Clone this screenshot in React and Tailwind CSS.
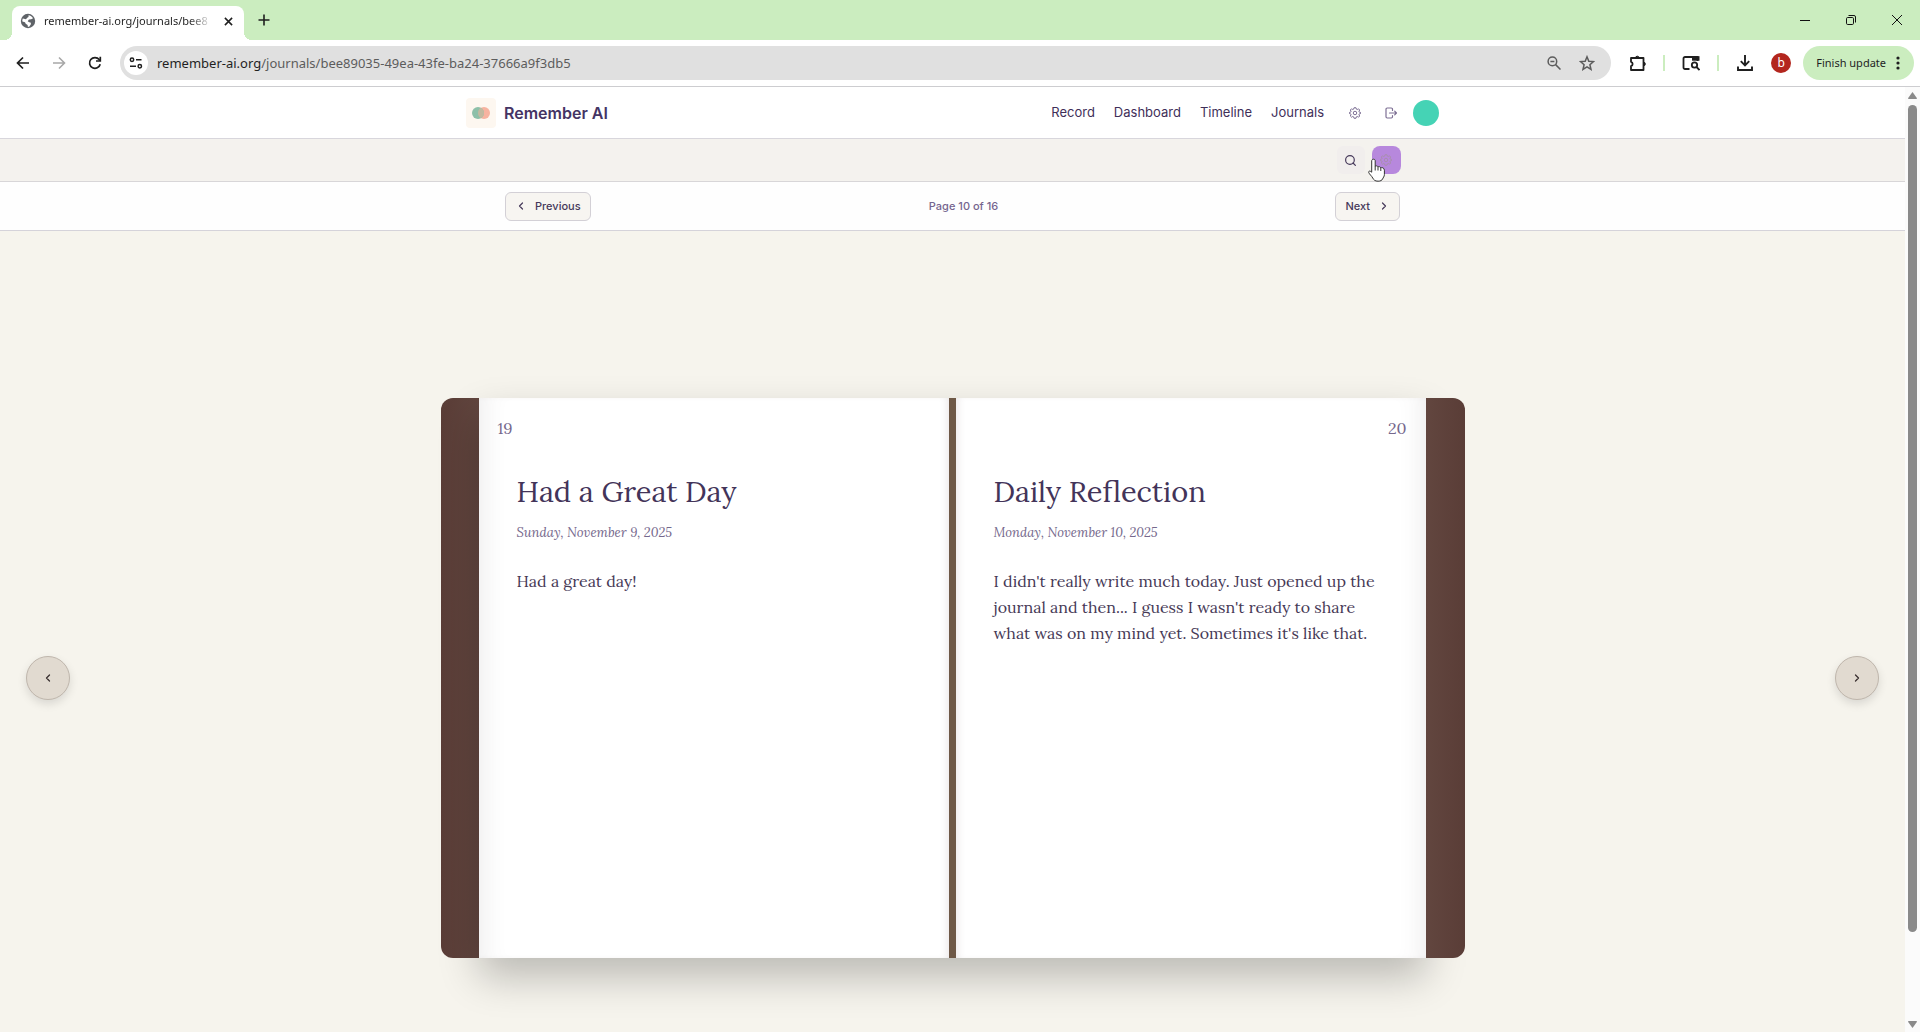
import React from "react";
import { Search, ChevronLeft, ChevronRight } from "lucide-react";

function GearIcon({ className }) {
  return (
    <svg viewBox="0 0 24 24" className={className} fill="none" stroke="currentColor" strokeWidth="2" strokeLinejoin="round">
      <path d="M10 1.500h4l.7 2.800 1.800.8 2.500-1.500 2.400 2.400-1.500 2.500.8 1.800 2.800.7v2l-2.800.7-.8 1.800 1.500 2.500-2.400 2.400-2.500-1.500-1.800.8-.7 2.800h-4l-.7-2.800-1.800-.8L5 20.400 2.600 18l1.500-2.500-.8-1.800L.5 13v-2l2.800-.7.8-1.800L2.600 6 5 3.600l2.500 1.500 1.800-.8z" />
      <circle cx="12" cy="12" r="3.500" />
    </svg>
  );
}

function TabStrip() {
  return (
    <div className="flex h-10 shrink-0 items-end bg-[#cbedbf] text-[#1f1f1f]">
      <div className="relative ml-3 flex h-[34px] w-[232px] items-center rounded-t-lg bg-white pl-2 pr-2 pb-1">
        <span className="absolute bottom-0 -left-2 h-2 w-2 bg-[radial-gradient(circle_at_0_0,#cbedbf_8px,white_8px)]" />
        <span className="absolute bottom-0 -right-2 h-2 w-2 bg-[radial-gradient(circle_at_100%_0,#cbedbf_8px,white_8px)]" />
        <svg viewBox="0 0 16 16" className="h-4 w-4 shrink-0">
          <circle cx="8" cy="8" r="7.2" fill="#5f6368" />
          <path d="M8.500 2.200c2 .2 3.700 1.400 4.600 3.100l-1.900 1-2.300.2-1.200 1.700 1.500 1.100 1.400.1.400 1.600-1.600 2.600-1.500.5-.3-2-1.900-1.300L5 9.200 2.400 8.400c-.3-1 .1-2.300.5-3L6 6.200l1.200-1.400L8.500 4z" fill="#fff" />
        </svg>
        <span className="ml-2 w-[168px] shrink-0 overflow-hidden text-[11px] whitespace-nowrap [mask-image:linear-gradient(to_right,black_145px,transparent_168px)]">
          remember-ai.org/journals/bee8
        </span>
        <button aria-label="Close tab" className="ml-3 shrink-0">
          <svg viewBox="0 0 10 10" className="h-[9px] w-[9px]" stroke="#1f1f1f" strokeWidth="1.7">
            <path d="M1 1l8 8M9 1l-8 8" />
          </svg>
        </button>
      </div>
      <button aria-label="New tab" className="mb-[14px] ml-[14px]">
        <svg viewBox="0 0 12 12" className="h-3 w-3" stroke="#1f1f1f" strokeWidth="1.6">
          <path d="M6 0.500v11M0.500 6h11" />
        </svg>
      </button>
      <div className="mr-[18px] mb-[15px] ml-auto flex items-center gap-9">
        <button aria-label="Minimize">
          <svg viewBox="0 0 10 10" className="h-[10px] w-[10px]" stroke="#111"><path d="M0 5.500h10" /></svg>
        </button>
        <button aria-label="Restore">
          <svg viewBox="0 0 10 10" className="h-[10px] w-[10px]" fill="none" stroke="#111">
            <rect x="0.500" y="2.500" width="7" height="7" rx="1.200" />
            <path d="M2.500 0.500H8a1.500 1.500 0 0 1 1.500 1.500v5.500" />
          </svg>
        </button>
        <button aria-label="Close">
          <svg viewBox="0 0 10 10" className="h-[10px] w-[10px]" stroke="#111"><path d="M0 0l10 10M10 0L0 10" /></svg>
        </button>
      </div>
    </div>
  );
}

function AddressBar() {
  return (
    <div className="flex h-[47px] shrink-0 items-center border-b border-[#cdcdd0] bg-white pr-[6px] pl-4 text-[#1f1f1f]">
      <button aria-label="Back">
        <svg viewBox="0 0 14 14" className="h-[14px] w-[14px]" fill="none" stroke="#1f1f1f" strokeWidth="1.700">
          <path d="M13 7H1.500M7 1.500L1.500 7 7 12.500" />
        </svg>
      </button>
      <button aria-label="Forward" className="ml-[22px]">
        <svg viewBox="0 0 14 14" className="h-[14px] w-[14px]" fill="none" stroke="#a8a8a8" strokeWidth="1.600">
          <path d="M1 7h11.500M7 1.500L12.500 7 7 12.500" />
        </svg>
      </button>
      <button aria-label="Reload" className="ml-[22px]">
        <svg viewBox="0 0 14 14" className="h-[14px] w-[14px]" fill="none" stroke="#1f1f1f" strokeWidth="1.700">
          <path d="M12.200 8.200A5.400 5.400 0 1 1 11.200 3.600L12 4.500" />
          <path d="M12.300 0.800v4.200H8" />
        </svg>
      </button>
      <div className="ml-[18px] flex h-[34px] flex-1 items-center rounded-full bg-[#e0e0e0] pr-4 pl-1">
        <button aria-label="Site information" className="flex h-6 w-6 items-center justify-center rounded-full bg-white">
          <svg viewBox="0 0 14 12" className="h-3 w-[14px]" fill="none" stroke="#1f1f1f" strokeWidth="1.500">
            <circle cx="3" cy="2.800" r="1.700" /><path d="M7 2.800h5.500M1 9.200h6" /><circle cx="10.800" cy="9.200" r="1.700" />
          </svg>
        </button>
        <div className="ml-[9px] text-[13px] leading-5 whitespace-nowrap text-[#5c5c5c]">
          <span className="text-[#1f1f1f]">remember-ai.org</span>/journals/bee89035-49ea-43fe-ba24-37666a9f3db5
        </div>
        <div className="ml-auto flex items-center gap-[18px]">
          <button aria-label="Zoom">
            <svg viewBox="0 0 14 14" className="h-[14px] w-[14px]" fill="none" stroke="#5c5c5c" strokeWidth="1.500">
              <circle cx="5.400" cy="5.400" r="4.300" /><path d="M8.600 8.600l4.900 4.900M3.400 5.400h4" />
            </svg>
          </button>
          <button aria-label="Bookmark">
            <svg viewBox="0 0 16 16" className="h-4 w-4" fill="none" stroke="#5c5c5c" strokeWidth="1.500">
              <path d="M8 1.800l1.800 4.400 4.700.4-3.600 3.100 1.100 4.600L8 11.800l-4 2.500 1.100-4.600L1.500 6.600l4.700-.4z" />
            </svg>
          </button>
        </div>
      </div>
      <button aria-label="Extensions" className="ml-[18px]">
        <svg viewBox="0 0 18 18" className="h-[18px] w-[18px]" fill="none" stroke="#1f1f1f" strokeWidth="1.800">
          <path d="M2 4h12.500v12H2v-3.800a2.300 2.300 0 0 0 0-4.400z" strokeLinejoin="round" />
          <path d="M6.500 4a1.800 1.800 0 0 1 3.600 0zM14.500 8.200a1.800 1.800 0 0 1 0 3.600z" fill="#1f1f1f" strokeWidth="1" />
        </svg>
      </button>
      <span className="ml-4 h-4 w-[2px] bg-[#cbedbf]" />
      <button aria-label="Search tabs" className="ml-[17px]">
        <svg viewBox="0 0 18 16" className="h-4 w-[18px]" fill="none" stroke="#1f1f1f" strokeWidth="1.800">
          <path d="M7.500 14H3a1.500 1.500 0 0 1-1.500-1.500v-9A1.500 1.500 0 0 1 3 2h12.500v4" />
          <path d="M10 1.200h7.500v4.500H10z" fill="#1f1f1f" stroke="none" />
          <circle cx="12.500" cy="10" r="2.700" /><path d="M14.500 12l3 3" />
        </svg>
      </button>
      <span className="ml-[17px] h-4 w-[2px] bg-[#cbedbf]" />
      <button aria-label="Downloads" className="ml-[18px]">
        <svg viewBox="0 0 16 16" className="h-4 w-4" fill="none" stroke="#1f1f1f" strokeWidth="1.900">
          <path d="M8 0v10M3.800 6.200L8 10.400l4.200-4.200M1 11.500V15h14v-3.500" />
        </svg>
      </button>
      <button aria-label="Profile" className="ml-[18px] flex h-5 w-5 items-center justify-center rounded-full bg-[#b3261e] text-xs leading-none text-white">b</button>
      <button className="ml-3 flex h-[34px] items-center gap-[10px] rounded-full bg-[#cbedbf] pr-[14px] pl-[13px] text-[11px] whitespace-nowrap">
        Finish update
        <svg viewBox="0 0 4 16" className="h-4 w-1" fill="#1f1f1f">
          <circle cx="2" cy="3" r="1.600" /><circle cx="2" cy="8" r="1.600" /><circle cx="2" cy="13" r="1.600" />
        </svg>
      </button>
    </div>
  );
}

function SiteHeader() {
  return (
    <header className="border-b border-[#d8d6dc] bg-white">
      <div className="mx-auto flex h-[51px] max-w-[973px] items-center">
        <a href="#home" className="flex items-center gap-2">
          <span className="flex h-[30px] w-[30px] items-center justify-center rounded bg-[#fdf7f0]">
            <svg viewBox="0 0 18 12" className="h-3 w-[18px]">
              <circle cx="12" cy="6" r="6" fill="#f7b3a0" />
              <circle cx="6" cy="6" r="6" fill="#8dc0a9" />
              <path d="M9 0.800a6 6 0 0 1 0 10.400a6 6 0 0 1 0-10.400z" fill="#c2b9a0" />
            </svg>
          </span>
          <span className="text-base font-semibold text-[#453464]">Remember AI</span>
        </a>
        <nav className="ml-auto flex items-center gap-[19px] text-[13px] text-[#3f2f59]">
          <a href="#record">Record</a>
          <a href="#dashboard">Dashboard</a>
          <a href="#timeline">Timeline</a>
          <a href="#journals">Journals</a>
        </nav>
        <div className="ml-[25px] flex items-center text-[#7d6f94]">
          <button aria-label="Settings">
            <GearIcon className="h-3 w-3" />
          </button>
          <button aria-label="Sign out" className="ml-6">
            <svg viewBox="0 0 12 12" className="h-3 w-3" fill="none" stroke="currentColor" strokeWidth="1.2" strokeLinecap="round" strokeLinejoin="round">
              <path d="M7.500 3.500V2.200A1.200 1.200 0 0 0 6.300 1H2.200A1.200 1.200 0 0 0 1 2.200v7.600A1.200 1.200 0 0 0 2.200 11h4.100a1.200 1.200 0 0 0 1.200-1.200V8.500M4.500 6h7M9.700 4.200L11.500 6 9.700 7.800" />
            </svg>
          </button>
          <button aria-label="Account" className="ml-4 h-[26px] w-[26px] rounded-full bg-[#45d3b5]" />
        </div>
      </div>
    </header>
  );
}

function JournalToolbar() {
  return (
    <div className="border-b border-[#d8d6d8] bg-[#f4f2ee]">
      <div className="mx-auto flex h-[42px] max-w-[896px] items-center justify-end gap-[7px]">
        <button aria-label="Search" className="flex h-7 w-7 items-center justify-center rounded-md bg-[#f1eeed] text-[#46395a]">
          <Search size={13} strokeWidth={2.200} />
        </button>
        <div className="relative">
          <button aria-label="Journal settings" className="flex h-7 w-[29px] items-center justify-center rounded-lg bg-[#b788dd] text-[#a98fae]">
            <GearIcon className="h-3 w-3" />
          </button>
          <svg viewBox="0 0 18 24" className="absolute top-3 -left-1 h-6 w-[18px]" fill="#fff" stroke="#333" strokeLinejoin="round">
            <path d="M5.500 1.200c1.100 0 1.700.7 1.700 1.700v5.300c.4-.6 2.500-.5 2.800.7.600-.6 2.400-.3 2.700.9.700-.5 3.700-.3 3.700 2.400v4.300c0 2.200-1.400 3.100-1.800 4.500-.6 1.300-2.200 2.200-4.500 2.200-3.100 0-4.400-1.300-5.300-3.100-1.200-2.300-3.400-3.700-4.100-5.700-.3-1.200 1-2.100 3-.2V2.900c0-1 .7-1.700 1.800-1.700z" />
            <path d="M7.200 8v4.500M10 9v3.500M12.800 10v3" />
          </svg>
        </div>
      </div>
    </div>
  );
}

function Pager() {
  return (
    <div className="border-b border-[#d5d3da] bg-[#fefefe]">
      <div className="mx-auto flex h-12 max-w-[895px] items-center text-[11px] font-medium text-[#46395a]">
        <div className="flex flex-1">
          <button className="flex h-[29px] items-center gap-2 rounded-md border border-[#d3d0d6] bg-[#f7f5f1] px-[9px]">
            <ChevronLeft size={12} strokeWidth={2.400} />Previous
          </button>
        </div>
        <span className="ml-[22px] text-[#75658f]">Page 10 of 16</span>
        <div className="flex flex-1 justify-end">
          <button className="flex h-[29px] items-center gap-2 rounded-md border border-[#d3d0d6] bg-[#f7f5f1] px-[9px]">
            Next<ChevronRight size={12} strokeWidth={2.400} />
          </button>
        </div>
      </div>
    </div>
  );
}

function BookPage({ number, title, date, side, children }) {
  const left = side === "left";
  return (
    <article
      className={
        left
          ? "flex min-w-0 flex-1 flex-col bg-white shadow-[inset_24px_0_24px_-20px_rgba(90,80,80,0.11),inset_-6px_0_8px_-5px_rgba(80,50,60,0.14)]"
          : "flex min-w-0 flex-1 flex-col bg-white shadow-[inset_-24px_0_24px_-20px_rgba(90,80,80,0.11),inset_6px_0_8px_-5px_rgba(80,50,60,0.14)]"
      }
    >
      <div className={left ? "px-[19px] pt-[18px] text-base text-[#75688c]" : "px-[19px] pt-[18px] text-right text-base text-[#75688c]"}>{number}</div>
      <div className="px-[38px] pt-8">
        <h2 className="text-[29px] leading-10 text-[#433459]">{title}</h2>
        <p className="mt-[9px] text-[13px] leading-6 text-[#75688c] italic">{date}</p>
        <p className="mt-[23px] text-base leading-[26px] text-[#463956]">{children}</p>
      </div>
    </article>
  );
}

function Book() {
  return (
    <section className="flex h-[560px] w-full max-w-[1024px] font-['Lora','Liberation_Serif',serif]">
      <div className="w-[38px] rounded-l-xl bg-linear-to-r from-[#5a3d37] to-[#62463f]" />
      <div className="flex flex-1 shadow-[0_19px_38px_rgba(0,0,0,0.24)]">
        <BookPage number="19" side="left" title="Had a Great Day" date="Sunday, November 9, 2025">
          Had a great day!
        </BookPage>
        <div className="w-[7px] bg-[#6e5846]" />
        <BookPage number="20" side="right" title="Daily Reflection" date="Monday, November 10, 2025">
          I didn't really write much today. Just opened up the journal and then... I guess I wasn't ready to share what was on my mind yet. Sometimes it's like that.
        </BookPage>
      </div>
      <div className="w-[39px] rounded-r-xl bg-linear-to-r from-[#62463f] to-[#5a3d37]" />
    </section>
  );
}

function TurnButton({ label, children }) {
  return (
    <button aria-label={label} className="flex h-11 w-11 shrink-0 items-center justify-center rounded-full border border-[#bfb6ac] bg-[#e1dad0] text-[#3a3030] shadow-[0_4px_10px_rgba(0,0,0,0.12)]">
      {children}
    </button>
  );
}

function Scrollbar() {
  return (
    <div className="flex w-[15px] shrink-0 flex-col items-center bg-[#fbfbfb] pt-[5px] pb-1">
      <svg viewBox="0 0 9 7" className="h-[7px] w-[9px]" fill="#8a8a8a"><path d="M4.500 0L9 6.200 8.500 7H.5L0 6.200z" /></svg>
      <div className="mt-[6px] mb-[89px] w-[9px] flex-1 rounded-full bg-[#8a8a8a]" />
      <svg viewBox="0 0 9 7" className="h-[7px] w-[9px]" fill="#8a8a8a"><path d="M4.500 7L9 .8 8.500 0H.5L0 .8z" /></svg>
    </div>
  );
}

export default function App() {
  return (
    <div className="flex h-screen flex-col overflow-hidden font-['Noto_Sans',sans-serif]">
      <TabStrip />
      <AddressBar />
      <div className="flex min-h-0 flex-1">
        <div className="flex min-w-0 flex-1 flex-col font-['Inter',sans-serif]">
          <SiteHeader />
          <JournalToolbar />
          <Pager />
          <main className="flex-1 overflow-hidden bg-[#f6f4ed] px-[26px] pt-[167px]">
            <div className="flex items-center justify-between">
              <TurnButton label="Previous page"><ChevronLeft size={12} strokeWidth={2.600} /></TurnButton>
              <Book />
              <TurnButton label="Next page"><ChevronRight size={12} strokeWidth={2.600} /></TurnButton>
            </div>
          </main>
        </div>
        <Scrollbar />
      </div>
    </div>
  );
}
